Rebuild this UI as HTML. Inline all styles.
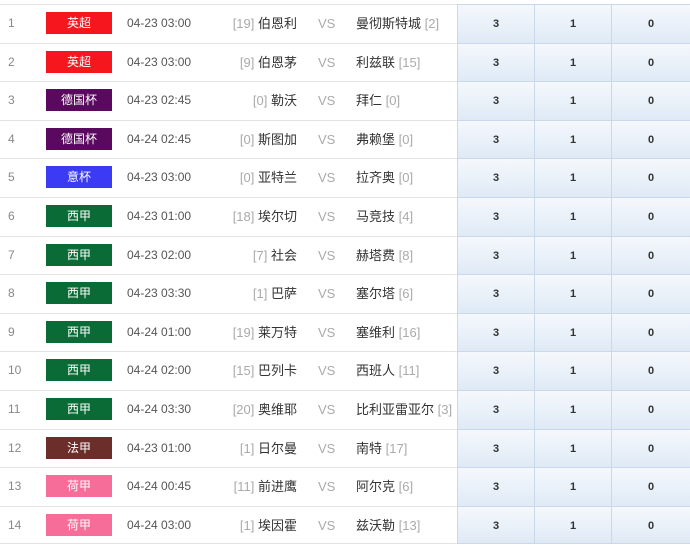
<!DOCTYPE html>
<html><head><meta charset="utf-8"><style>
body{margin:0;width:690px;height:549px;background:#fff;overflow:hidden;font-family:"Liberation Sans","Noto Sans CJK SC",sans-serif;font-size:12px;color:#333;position:relative}
.r{position:absolute;left:0;width:690px;height:38.6px;border-top:1px solid #e3e3e3;box-sizing:border-box}
.r div{position:absolute;top:0;line-height:37px;height:37px}
.n{left:8px;color:#888}
.b{left:46px;width:66px;height:22px!important;line-height:22px!important;top:7px!important;color:#fff;text-align:center;font-size:12px;font-weight:normal}
.t{left:127px;color:#555}
.h{right:393px;text-align:right;color:#333;font-size:13px}
.vs{left:318px;color:#aaa;font-size:13px}
.a{left:356px;color:#333;font-size:13px}
.g{color:#aaa}
.s{width:77px;text-align:center;font-weight:bold;font-size:11px;background:linear-gradient(#f5f8fc,#dfeaf6);border-left:1px solid #c9d9ea;top:-1px!important;height:38.6px!important;line-height:38px!important;border-top:1px solid #c9d9ea;box-sizing:border-box}
.s1{left:457px}.s2{left:534px}.s3{left:611px;width:79px}
</style></head><body>
<div class="r" style="top:4px"><div class="n">1</div><div class="b" style="background:#f5161e">英超</div><div class="t">04-23 03:00</div><div class="h"><span class="g">[19]</span> 伯恩利</div><div class="vs">VS</div><div class="a">曼彻斯特城 <span class="g">[2]</span></div><div class="s s1">3</div><div class="s s2">1</div><div class="s s3">0</div></div>
<div class="r" style="top:42.6px"><div class="n">2</div><div class="b" style="background:#f5161e">英超</div><div class="t">04-23 03:00</div><div class="h"><span class="g">[9]</span> 伯恩茅</div><div class="vs">VS</div><div class="a">利兹联 <span class="g">[15]</span></div><div class="s s1">3</div><div class="s s2">1</div><div class="s s3">0</div></div>
<div class="r" style="top:81.2px"><div class="n">3</div><div class="b" style="background:#5a0a5e">德国杯</div><div class="t">04-23 02:45</div><div class="h"><span class="g">[0]</span> 勒沃</div><div class="vs">VS</div><div class="a">拜仁 <span class="g">[0]</span></div><div class="s s1">3</div><div class="s s2">1</div><div class="s s3">0</div></div>
<div class="r" style="top:119.8px"><div class="n">4</div><div class="b" style="background:#5a0a5e">德国杯</div><div class="t">04-24 02:45</div><div class="h"><span class="g">[0]</span> 斯图加</div><div class="vs">VS</div><div class="a">弗赖堡 <span class="g">[0]</span></div><div class="s s1">3</div><div class="s s2">1</div><div class="s s3">0</div></div>
<div class="r" style="top:158.4px"><div class="n">5</div><div class="b" style="background:#3b3bf5">意杯</div><div class="t">04-23 03:00</div><div class="h"><span class="g">[0]</span> 亚特兰</div><div class="vs">VS</div><div class="a">拉齐奥 <span class="g">[0]</span></div><div class="s s1">3</div><div class="s s2">1</div><div class="s s3">0</div></div>
<div class="r" style="top:197px"><div class="n">6</div><div class="b" style="background:#0b6b36">西甲</div><div class="t">04-23 01:00</div><div class="h"><span class="g">[18]</span> 埃尔切</div><div class="vs">VS</div><div class="a">马竞技 <span class="g">[4]</span></div><div class="s s1">3</div><div class="s s2">1</div><div class="s s3">0</div></div>
<div class="r" style="top:235.6px"><div class="n">7</div><div class="b" style="background:#0b6b36">西甲</div><div class="t">04-23 02:00</div><div class="h"><span class="g">[7]</span> 社会</div><div class="vs">VS</div><div class="a">赫塔费 <span class="g">[8]</span></div><div class="s s1">3</div><div class="s s2">1</div><div class="s s3">0</div></div>
<div class="r" style="top:274.2px"><div class="n">8</div><div class="b" style="background:#0b6b36">西甲</div><div class="t">04-23 03:30</div><div class="h"><span class="g">[1]</span> 巴萨</div><div class="vs">VS</div><div class="a">塞尔塔 <span class="g">[6]</span></div><div class="s s1">3</div><div class="s s2">1</div><div class="s s3">0</div></div>
<div class="r" style="top:312.8px"><div class="n">9</div><div class="b" style="background:#0b6b36">西甲</div><div class="t">04-24 01:00</div><div class="h"><span class="g">[19]</span> 莱万特</div><div class="vs">VS</div><div class="a">塞维利 <span class="g">[16]</span></div><div class="s s1">3</div><div class="s s2">1</div><div class="s s3">0</div></div>
<div class="r" style="top:351.4px"><div class="n">10</div><div class="b" style="background:#0b6b36">西甲</div><div class="t">04-24 02:00</div><div class="h"><span class="g">[15]</span> 巴列卡</div><div class="vs">VS</div><div class="a">西班人 <span class="g">[11]</span></div><div class="s s1">3</div><div class="s s2">1</div><div class="s s3">0</div></div>
<div class="r" style="top:390px"><div class="n">11</div><div class="b" style="background:#0b6b36">西甲</div><div class="t">04-24 03:30</div><div class="h"><span class="g">[20]</span> 奥维耶</div><div class="vs">VS</div><div class="a">比利亚雷亚尔 <span class="g">[3]</span></div><div class="s s1">3</div><div class="s s2">1</div><div class="s s3">0</div></div>
<div class="r" style="top:428.6px"><div class="n">12</div><div class="b" style="background:#6b2e2b">法甲</div><div class="t">04-23 01:00</div><div class="h"><span class="g">[1]</span> 日尔曼</div><div class="vs">VS</div><div class="a">南特 <span class="g">[17]</span></div><div class="s s1">3</div><div class="s s2">1</div><div class="s s3">0</div></div>
<div class="r" style="top:467.2px"><div class="n">13</div><div class="b" style="background:#f76d9a">荷甲</div><div class="t">04-24 00:45</div><div class="h"><span class="g">[11]</span> 前进鹰</div><div class="vs">VS</div><div class="a">阿尔克 <span class="g">[6]</span></div><div class="s s1">3</div><div class="s s2">1</div><div class="s s3">0</div></div>
<div class="r" style="top:505.8px;border-bottom:1px solid #e3e3e3"><div class="n">14</div><div class="b" style="background:#f76d9a">荷甲</div><div class="t">04-24 03:00</div><div class="h"><span class="g">[1]</span> 埃因霍</div><div class="vs">VS</div><div class="a">兹沃勒 <span class="g">[13]</span></div><div class="s s1" style="border-bottom:1px solid #c9d9ea">3</div><div class="s s2" style="border-bottom:1px solid #c9d9ea">1</div><div class="s s3" style="border-bottom:1px solid #c9d9ea">0</div></div>
</body></html>
